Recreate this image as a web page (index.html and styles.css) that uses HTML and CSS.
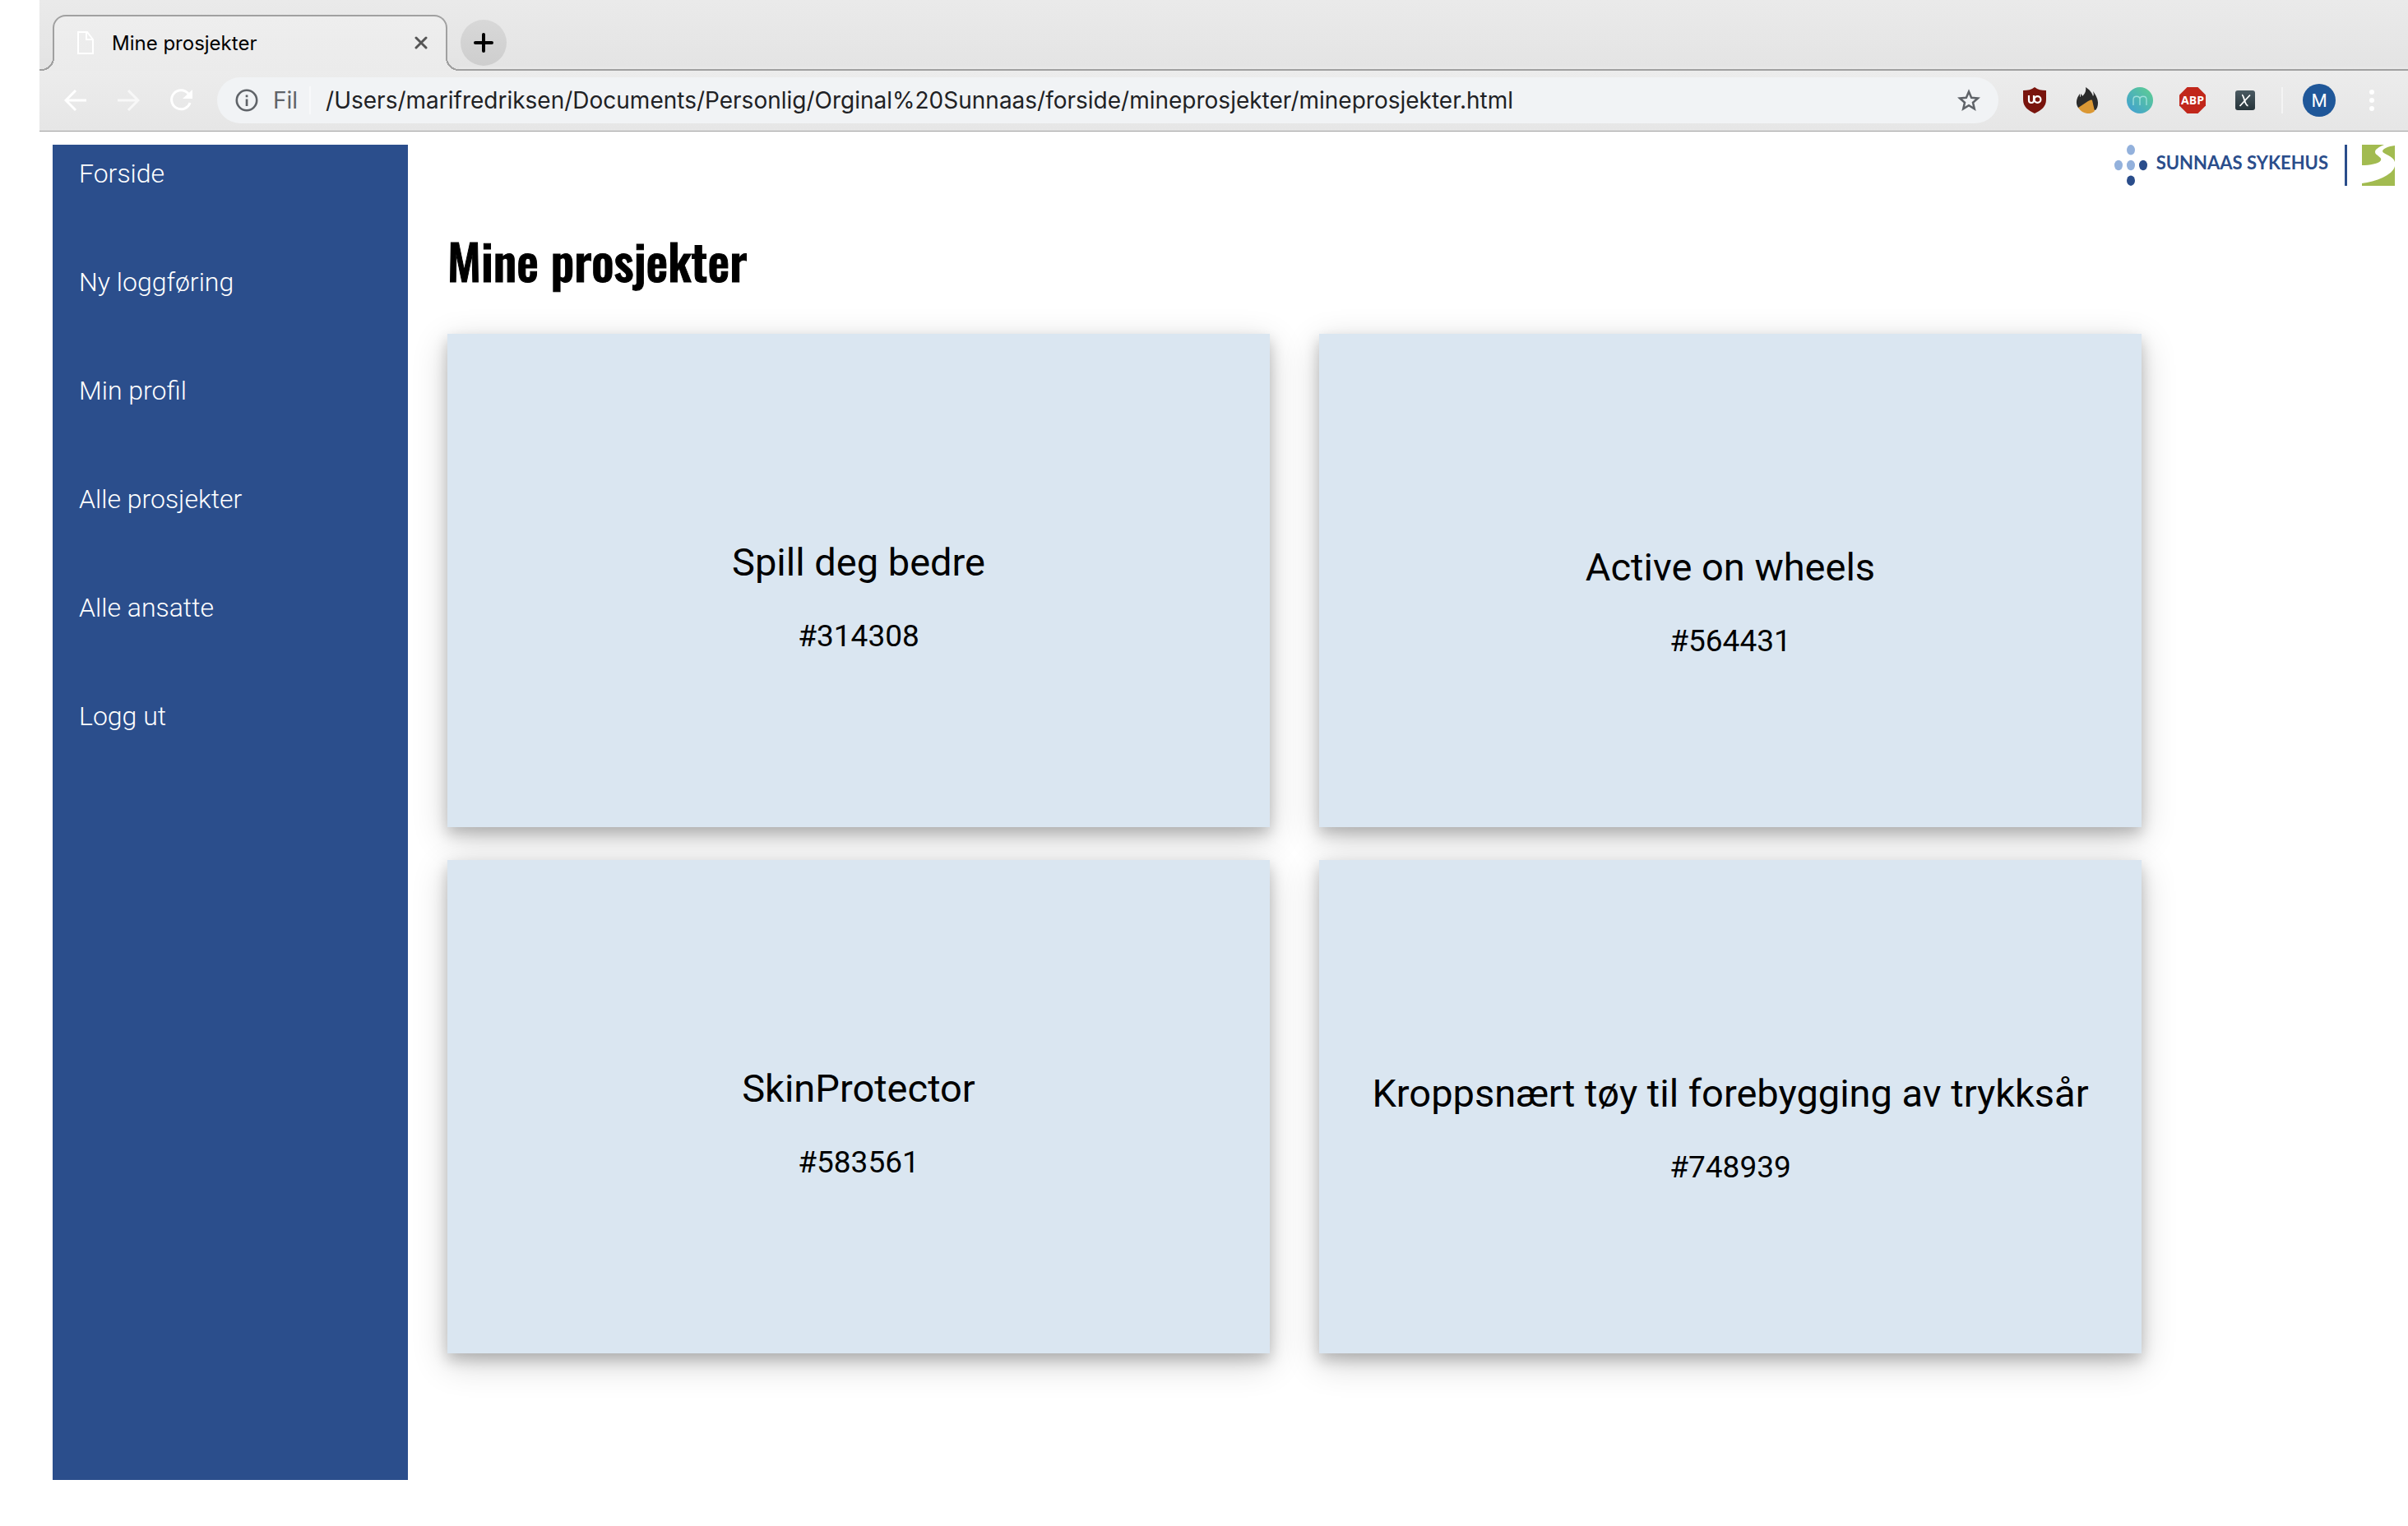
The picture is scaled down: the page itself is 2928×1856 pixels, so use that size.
FILE: index.html
```html
<!DOCTYPE html>
<html lang="no">
<head>
<meta charset="utf-8">
<title>Mine prosjekter</title>
<link rel="stylesheet" href="styles.css">
</head>
<body>
<div class="window">
  <header class="browser">
    <div class="tabs">
      <div class="tab">
        <svg class="tab-doc" width="20" height="28" viewBox="0 0 20 28" fill="none" stroke="#fff" stroke-width="2"><path d="M1 1h11l7 9v17H1zM11 1v9h8"/></svg>
        <span class="tab-title">Mine prosjekter</span>
        <button class="icon-button" aria-label="Lukk fane"><svg width="16" height="16" viewBox="0 0 16 16" stroke="#555" stroke-width="3" stroke-linecap="round"><path d="M2 2l12 12M14 2L2 14"/></svg></button>
      </div>
      <button class="new-tab" aria-label="Ny fane"><svg width="24" height="24" viewBox="0 0 24 24" stroke="#000" stroke-width="4" stroke-linecap="round"><path d="M12 2v20M2 12h20"/></svg></button>
    </div>
    <div class="toolbar">
      <div class="nav-buttons">
        <button class="icon-button" aria-label="Tilbake"><svg width="28" height="28" viewBox="0 0 28 28" fill="none" stroke="#fff" stroke-width="3"><path d="M27 14H3M14 2L2 14l12 12"/></svg></button>
        <button class="icon-button" aria-label="Frem"><svg width="28" height="28" viewBox="0 0 28 28" fill="none" stroke="#f8f8f8" stroke-width="3"><path d="M1 14h24M14 2l12 12-12 12"/></svg></button>
        <button class="icon-button" aria-label="Last inn på nytt"><svg width="28" height="28" viewBox="0 0 28 28" fill="none" stroke="#fff" stroke-width="3"><path d="M23 6A11.500 11.500 0 1 0 25 17"/><path d="M28 1v11H16z" fill="#fff" stroke="none"/></svg></button>
      </div>
      <div class="address">
        <svg width="28" height="28" viewBox="0 0 28 28"><circle cx="14" cy="14" r="12.200" fill="none" stroke="#5f6368" stroke-width="2.600"/><path d="M12.700 12.500h2.700V21h-2.700zM12.700 7.500h2.700v2.700h-2.700z" fill="#5f6368"/></svg>
        <label class="scheme" for="url">Fil</label>
        <input class="url" id="url" type="text" value="/Users/marifredriksen/Documents/Personlig/Orginal%20Sunnaas/forside/mineprosjekter/mineprosjekter.html">
        <button class="icon-button" aria-label="Bokmerke"><svg width="28" height="28" viewBox="0 0 28 28" fill="none" stroke="#5f6368" stroke-width="2.500"><path d="M14 3.500l3.100 7.300 7.900.7-6 5.200 1.800 7.700-6.800-4.100-6.800 4.100L9 16.700l-6-5.200 7.900-.7z"/></svg></button>
      </div>
      <div class="extensions">
        <svg width="32" height="32" viewBox="0 0 32 32"><path d="M16 0c4 3 8 4 14 4v11c0 9-6 13-14 17C8 28 2 24 2 15V4c6 0 10-1 14-4z" fill="#79140d"/><path d="M9 10v6a3 3 0 0 0 6 0v-6m0 5" fill="none" stroke="#fff" stroke-width="2.200"/><circle cx="19.500" cy="15" r="3.900" fill="none" stroke="#fff" stroke-width="2.200"/></svg>
        <svg width="32" height="32" viewBox="0 0 32 32"><path d="M14 0c5 3 8 7 9 11 1-1 1-3 0-6 3 4 6 9 6 14 0 4-1 7-3 9L5 25c-2-3-3-7-1-12 1-2 2-4 3-5v4c1 0 1-2 1-4 1 1 2 2 2 3 3-3 5-6 4-11z" fill="#2b2b2b"/><path d="M5 25l12-8c2-1 4-2 5-1l3 13c-5 5-15 4-20-4z" fill="#db9834"/></svg>
        <svg width="32" height="32" viewBox="0 0 32 32"><defs><linearGradient id="mint" x1="0" y1="1" x2="1" y2="0"><stop offset=".1" stop-color="#43a2cf"/><stop offset="1" stop-color="#5fd08f"/></linearGradient></defs><circle cx="16" cy="16" r="16" fill="url(#mint)"/><path d="M8 22v-7c0-5 8-5 8 0v7m0-7c0-5 8-5 8 0v7" fill="none" stroke="#9fe0dc" stroke-width="1.300"/></svg>
        <svg width="32" height="32" viewBox="0 0 32 32"><path d="M9.500 0h13L32 9.500v13L22.500 32h-13L0 22.500v-13z" fill="#c1271b"/><text x="16" y="21" class="abp" text-anchor="middle">ABP</text></svg>
        <svg width="32" height="32" viewBox="0 0 32 32"><defs><linearGradient id="slate" x1="0" y1="0" x2="0" y2="1"><stop stop-color="#4a5a62"/><stop offset="1" stop-color="#27343a"/></linearGradient></defs><rect x="4" y="4" width="24" height="24" rx="3" fill="url(#slate)"/><path d="M12 9.500c3 0 3 13 7.500 13M22 9.500L9.500 23" fill="none" stroke="#fff" stroke-width="1.800"/></svg>
      </div>
      <button class="profile" aria-label="Profil">M</button>
      <button class="icon-button" aria-label="Meny"><svg width="8" height="28" viewBox="0 0 8 28" fill="#fff"><circle cx="4" cy="4" r="3"/><circle cx="4" cy="14" r="3"/><circle cx="4" cy="24" r="3"/></svg></button>
    </div>
  </header>
  <div class="page">
    <nav class="sidebar">
      <a href="#">Forside</a>
      <a href="#">Ny loggføring</a>
      <a href="#">Min profil</a>
      <a href="#">Alle prosjekter</a>
      <a href="#">Alle ansatte</a>
      <a href="#">Logg ut</a>
    </nav>
    <main class="content">
      <div class="logo">
        <svg width="40" height="50" viewBox="0 0 40 50"><g fill="#93b1dc"><ellipse cx="20" cy="6.300" rx="5" ry="6.200"/><ellipse cx="5" cy="25" rx="5" ry="6.200"/><ellipse cx="20" cy="25" rx="5" ry="6.200"/></g><g fill="#2a4d8b"><ellipse cx="35" cy="25" rx="5" ry="6.200"/><ellipse cx="20" cy="43.700" rx="5" ry="6.200"/></g></svg>
        <span class="logo-name">SUNNAAS SYKEHUS</span>
        <svg class="logo-mark" width="40" height="50" viewBox="0 0 40 50"><path d="M0 0h40v50H0z" fill="#a2bb50"/><path d="M27 0c-6 3-11 5-11 9 0 4 9 6 7 10-2 4-14 6-23 6v22c16-2 38-10 40-21V21C38 13 26 12 25 8c0-3 7-6 15-7V0z" fill="#fff"/></svg>
      </div>
      <h1>Mine prosjekter</h1>
      <div class="cards">
        <a class="card" href="#"><h2>Spill deg bedre</h2><p>#314308</p></a>
        <a class="card" href="#"><h2>Active on wheels</h2><p>#564431</p></a>
        <a class="card" href="#"><h2>SkinProtector</h2><p>#583561</p></a>
        <a class="card" href="#"><h2>Kroppsnært tøy til forebygging av trykksår</h2><p>#748939</p></a>
      </div>
    </main>
  </div>
</div>
</body>
</html>
```
FILE: styles.css
```css
* { box-sizing: border-box; }
body { margin: 0; background: #fff; font-family: Roboto, sans-serif; color: #000; }
svg { display: block; flex: none; }
button { font: inherit; border: 0; padding: 0; background: none; }
a { color: inherit; text-decoration: none; }
.window { padding-left: 48px; }

/* browser frame */
.browser { background: linear-gradient(#eaeaea, #e4e4e4 80px, #ececec 86px, #e6e6e6); border-bottom: 1px solid #a0a0a0; font-family: Inter, sans-serif; }
.tabs { display: flex; height: 86px; padding: 18px 0 0 16px; border-bottom: 2px solid #a0a0a0; }
.tab { position: relative; display: flex; align-items: center; width: 480px; height: 68px; padding: 0 22px 2px 28px; border: 2px solid #a0a0a0; border-bottom: 0; border-radius: 16px 16px 0 0; background: linear-gradient(#eee, #ebebeb); }
.tab::before, .tab::after { content: ""; position: absolute; bottom: 0; width: 16px; height: 16px; }
.tab::before { left: -16px; background: radial-gradient(circle at 0 0, #e4e4e4 14px, #a0a0a0 14px 16px, #ebebeb 16px); }
.tab::after { right: -16px; background: radial-gradient(circle at 100% 0, #e4e4e4 14px, #a0a0a0 14px 16px, #ebebeb 16px); }
.tab-title { flex: 1; margin-left: 22px; font-size: 24px; }
.new-tab { display: grid; place-items: center; width: 56px; height: 56px; margin: 6px 0 0 16px; border-radius: 50%; background: linear-gradient(#d8d8d8, #cecece); }
.toolbar { display: flex; align-items: center; height: 73px; padding: 0 40px 1px 30px; }
.nav-buttons { display: flex; gap: 36px; margin-right: 30px; }
.address { display: flex; flex: 1; align-items: center; height: 56px; padding: 0 22px; border-radius: 28px; background: #f1f3f5; font-size: 28px; }
.scheme { margin-left: 18px; padding-right: 14px; border-right: 2px solid #f8f9fa; color: #5f6368; }
.url { flex: 1; min-width: 0; margin-left: 18px; padding: 0; border: 0; outline: 0; background: none; color: #202124; font: inherit; }
.extensions { display: flex; gap: 32px; margin-left: 28px; padding-right: 28px; border-right: 2px solid #f4f4f4; }
.abp { fill: #fff; font: 700 14px "Open Sans", sans-serif; }
.profile { width: 40px; height: 40px; margin: 0 40px 0 24px; border-radius: 50%; background: #1f5799; color: #fff; font: 22px Roboto, sans-serif; }

/* page */
.page { display: flex; padding: 16px 16px 0; }
.sidebar { display: flex; flex: none; flex-direction: column; gap: 92px; width: 432px; min-height: 1624px; padding: 15px 32px; background: #2b4e8c; color: #fff; font-size: 32px; font-weight: 300; line-height: 40px; }
.content { flex: 1; padding-left: 48px; }
.logo { display: flex; align-items: center; justify-content: flex-end; height: 50px; }
.logo-name { margin: 0 20px 6px 11px; color: #2a4d8b; font: 700 22px/30px Lato, sans-serif; }
.logo-mark { box-sizing: content-box; padding-left: 18px; border-left: 3px solid #2a4d8b; }
h1 { margin: 44px 0; font: 500 60px/92px Oswald, sans-serif; -webkit-text-stroke: 1px #000; }
.cards { display: grid; grid-template-columns: 1fr 1fr; gap: 40px 60px; margin-right: 308px; }
.card { aspect-ratio: 5 / 3; padding-top: 246px; background: #dae6f1; box-shadow: 0 8px 16px rgba(0, 0, 0, .2), 0 12px 40px rgba(0, 0, 0, .19); text-align: center; }
.card:nth-child(even) { padding-top: 252px; }
.card h2 { margin: 0; font-size: 47px; font-weight: 400; line-height: 64px; }
.card p { margin: 32px 0 0; font-size: 37px; line-height: 52px; }
```
